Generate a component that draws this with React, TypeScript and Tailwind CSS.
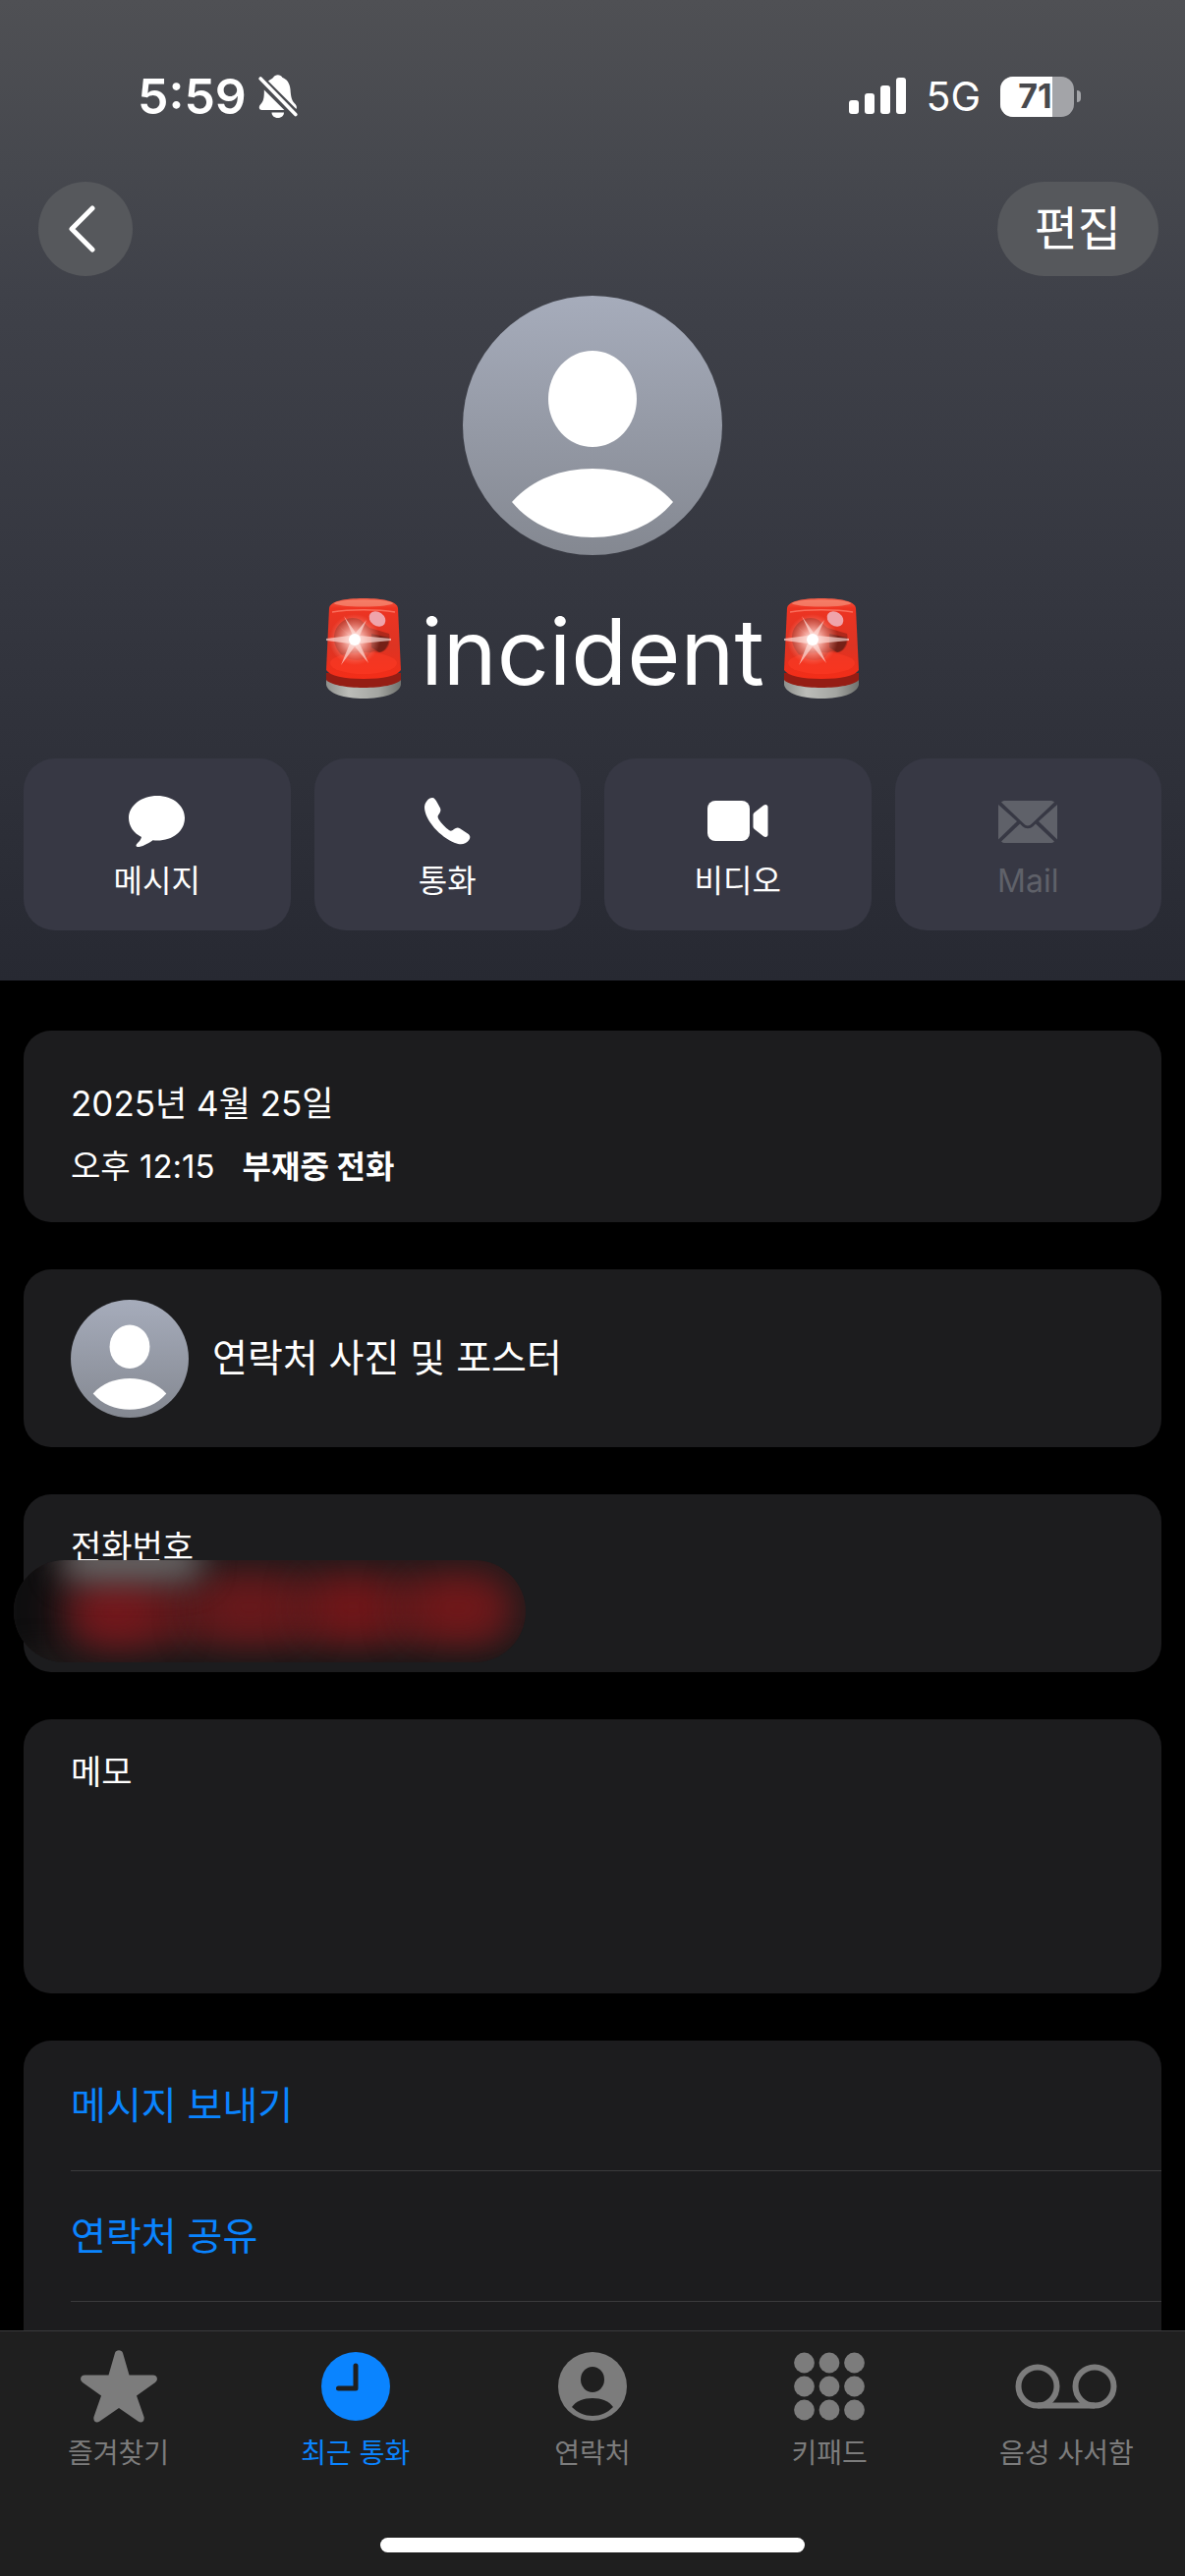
import { useId, type ReactNode } from 'react'

function BellOffIcon() {
  return (
    <svg viewBox="0 0 40 44" className="h-11 w-10" fill="#fff" aria-hidden="true">
      <path d="M10 6.500C12.500 4.500 14 4 15 3C17 -0.700 22.500 -0.700 24.500 3C29 4.500 32 9 32.500 15C33 24 34.500 27 37 29.500C38.500 31 39.500 33 38.500 35Z" />
      <path d="M5.800 15.500L26.300 36H3.500C0.500 36 0 32.500 2 30.500C5 27.500 6 24 5.800 15.500Z" />
      <path d="M13.500 38.500H26C26 41.500 23.500 44 19.700 44C16 44 13.500 41.500 13.500 38.500Z" />
      <path d="M2.200 4L37.800 40.500" stroke="#fff" strokeWidth="3.600" strokeLinecap="round" />
    </svg>
  )
}

function SignalIcon() {
  return (
    <svg viewBox="0 0 58 38" className="h-[38px] w-[58px]" fill="#fff" aria-hidden="true">
      <rect x="0" y="23" width="10" height="14" rx="3" />
      <rect x="16" y="16" width="10" height="21" rx="3" />
      <rect x="32" y="8" width="10" height="29" rx="3" />
      <rect x="48" y="0" width="10" height="37" rx="3" />
    </svg>
  )
}

function Battery({ level }: { level: number }) {
  return (
    <div className="flex items-center gap-[3px]">
      <div className="relative flex h-[41px] w-[75px] items-center justify-center overflow-hidden rounded-[13px] bg-[#a3a4a8] pr-1">
        <div className="absolute inset-y-0 left-0 bg-white" style={{ width: `${level}%` }} />
        <span className="relative text-[34px] leading-none font-bold text-[#48494d]">{level}</span>
      </div>
      <div className="h-3 w-1 rounded-r-full bg-[#a3a4a8]" />
    </div>
  )
}

function Avatar({ className }: { className: string }) {
  const id = useId()
  return (
    <svg viewBox="0 0 264 264" className={className} role="img" aria-label="프로필">
      <defs>
        <linearGradient id={id} x1="0" y1="0" x2="0" y2="1">
          <stop offset="0" stopColor="#a6acbb" />
          <stop offset="1" stopColor="#848891" />
        </linearGradient>
      </defs>
      <circle cx="132" cy="132" r="132" fill={`url(#${id})`} />
      <ellipse cx="132" cy="105" rx="45" ry="49" fill="#fff" />
      <path d="M50 210C70 187 100 176 132 176C164 176 194 187 214 210C194 234 164 246 132 246C100 246 70 234 50 210Z" fill="#fff" />
    </svg>
  )
}

function Siren() {
  const id = useId()
  return (
    <svg viewBox="0 0 76 102" className="h-[102px] w-[76px]" role="img" aria-label="🚨">
      <defs>
        <linearGradient id={`${id}d`} x1="0" y1="0" x2="0" y2="1">
          <stop offset="0" stopColor="#f5604a" />
          <stop offset="0.120" stopColor="#ee3422" />
          <stop offset="0.600" stopColor="#dd3423" />
          <stop offset="1" stopColor="#f42d18" />
        </linearGradient>
        <linearGradient id={`${id}b`} x1="0" y1="0" x2="1" y2="0">
          <stop offset="0" stopColor="#8d8f8c" />
          <stop offset="0.300" stopColor="#bcbdb9" />
          <stop offset="0.700" stopColor="#a3a5a1" />
          <stop offset="1" stopColor="#6f716e" />
        </linearGradient>
        <radialGradient id={`${id}g`}>
          <stop offset="0" stopColor="#fff" />
          <stop offset="0.350" stopColor="#ffb9b0" stopOpacity="0.850" />
          <stop offset="1" stopColor="#ff8d7c" stopOpacity="0" />
        </radialGradient>
      </defs>
      <path d="M0 80H76V88C74 97 58 102 38 102C18 102 2 97 0 88Z" fill={`url(#${id}b)`} />
      <path d="M0 76H76V83C72 88 56 91 38 91C20 91 4 88 0 83Z" fill="#951d14" />
      <path d="M3 10C4 3 18 0 38 0C58 0 72 3 73 10L76 73C72 79 58 82 38 82C18 82 4 79 0 73Z" fill={`url(#${id}d)`} />
      <path d="M10 31C17 19 28 18 35 22L44 30L64 36C66 44 64 52 56 55C50 55 47 52 44 57C38 66 22 64 14 56C8 48 6 40 10 31Z" fill="#8d2318" opacity="0.600" />
      <path d="M46 36L64 40C64 47 60 54 54 55L46 50Z" fill="#5d1c15" opacity="0.700" />
      <ellipse cx="38" cy="66" rx="34" ry="11" fill="#ff3c26" opacity="0.500" />
      <ellipse cx="38" cy="5" rx="30" ry="3.500" fill="#f58e78" opacity="0.700" />
      <path d="M6 14C24 11 52 11 70 14" stroke="#ff8775" strokeWidth="1.500" fill="none" opacity="0.700" />
      <ellipse cx="52" cy="21" rx="9" ry="7" transform="rotate(35 52 21)" fill="#efa4ab" />
      <circle cx="29" cy="42" r="26" fill={`url(#${id}g)`} />
      <path d="M29 42L18 18L30 35L41 22L34 38L66 41V43L34 46L43 66L29 49L15 68L24 46L0 43V41L24 38L10 26Z" fill="#ffe3df" opacity="0.650" />
      <circle cx="29" cy="42" r="6" fill="#fff" />
    </svg>
  )
}

function MessageIcon() {
  return (
    <svg viewBox="0 0 58 53" className="h-[53px] w-[58px]" fill="currentColor" aria-hidden="true">
      <path d="M29 0C45 0 57 10 57 22.500C57 36 45 45.500 29 45.500C27.500 45.500 26 45.300 24.500 45.200C19 49 13.500 52 9 52C7.500 52 7 50.500 8 49.300C10 47 12.500 45 13 42C5 38 0 31 0 22.500C0 10 13 0 29 0Z" />
    </svg>
  )
}

function PhoneIcon() {
  return (
    <svg viewBox="0 0 48 48" className="h-12 w-12" fill="currentColor" aria-hidden="true">
      <path d="M1 10C1 5 5 0 9 0C11 0 12.500 2 14 5L17 10.500C18 13 17 15 15.500 17C14 19 14.500 20 15.500 22C18.500 26.500 22 30 26 33C28 34.300 29 33.500 31 32C33 30.500 35 30 37 31.200L45 36.500C48 38.500 48 41 45.500 44C43 47 38.500 48.500 32 46C17 40 1.500 23 1 10Z" />
    </svg>
  )
}

function VideoIcon() {
  return (
    <svg viewBox="0 0 62 42" className="h-[42px] w-[62px]" fill="currentColor" aria-hidden="true">
      <rect x="0" y="0" width="43" height="41" rx="8" />
      <path d="M46.500 14.500C46.500 13.500 47 12.800 47.800 12L57 4.800C59 3.300 61.500 4 61.500 6.500V34.500C61.500 37 59 37.700 57 36.200L47.800 29C47 28.200 46.500 27.500 46.500 26.500Z" />
    </svg>
  )
}

function MailIcon() {
  return (
    <svg viewBox="0 0 60 43" className="h-[43px] w-[60px]" fill="currentColor" aria-hidden="true">
      <path d="M3 1.500C4 0.500 5.500 0 7 0H53C54.500 0 56 0.500 57 1.500L34 23.500C31.500 26 28.500 26 26 23.500Z" />
      <path d="M0 4L19 21L0 39.500Z" />
      <path d="M60 4L41 21L60 39.500Z" />
      <path d="M3 41.500L22 23.500L24.500 26C28 29 32 29 35.500 26L38 23.500L57 41.500C56 42.500 54.500 43 53 43H7C5.500 43 4 42.500 3 41.500Z" />
    </svg>
  )
}

function StarIcon() {
  return (
    <svg viewBox="0 0 78 74" className="h-[74px] w-[78px]" fill="currentColor" aria-hidden="true">
      <path d="M35 3C36 -0.800 42 -0.800 43 3L49.500 25.500H73.500C78 25.500 79.500 30 76 33L57 46.500L64.500 68C65.500 72.500 62 75 58.500 72.500L39 59L19.500 72.500C16 75 12.500 72.500 13.500 68L21 46.500L2 33C-1.500 30 0 25.500 4.500 25.500H28.500Z" />
    </svg>
  )
}

function ClockIcon() {
  return (
    <svg viewBox="0 0 70 70" className="h-[70px] w-[70px]" aria-hidden="true">
      <circle cx="35" cy="35" r="35" fill="currentColor" />
      <path d="M35 14V37H17.500" fill="none" stroke="#1f1f1f" strokeWidth="5" strokeLinecap="round" strokeLinejoin="round" />
    </svg>
  )
}

function ContactIcon() {
  return (
    <svg viewBox="0 0 70 70" className="h-[70px] w-[70px]" aria-hidden="true">
      <circle cx="35" cy="35" r="35" fill="currentColor" />
      <ellipse cx="35" cy="28" rx="12" ry="13" fill="#1f1f1f" />
      <path d="M14 56C18 50 26 47 35 47C44 47 52 50 56 56C50 62 43 65 35 65C27 65 20 62 14 56Z" fill="#1f1f1f" />
    </svg>
  )
}

function KeypadIcon() {
  return (
    <svg viewBox="0 0 72 70" className="h-[70px] w-[72px]" fill="currentColor" aria-hidden="true">
      {[11, 35, 59].map((cy) => [10.5, 36, 61.5].map((cx) => <circle key={`${cx}-${cy}`} cx={cx} cy={cy} r="10.400" />))}
    </svg>
  )
}

function VoicemailIcon() {
  return (
    <svg viewBox="0 0 104 46" className="h-[46px] w-[104px]" fill="none" stroke="currentColor" strokeWidth="6" aria-hidden="true">
      <circle cx="23" cy="23" r="19.500" />
      <circle cx="81" cy="23" r="19.500" />
      <path d="M23 42.500H81" />
    </svg>
  )
}

const actions = [
  { label: '메시지', icon: <MessageIcon /> },
  { label: '통화', icon: <PhoneIcon /> },
  { label: '비디오', icon: <VideoIcon /> },
  { label: 'Mail', icon: <MailIcon />, disabled: true },
]

const tabs = [
  { label: '즐겨찾기', icon: <StarIcon /> },
  { label: '최근 통화', icon: <ClockIcon />, active: true },
  { label: '연락처', icon: <ContactIcon /> },
  { label: '키패드', icon: <KeypadIcon /> },
  { label: '음성 사서함', icon: <VoicemailIcon /> },
]

function Card({ children, className = '' }: { children: ReactNode; className?: string }) {
  return <section className={`relative rounded-[28px] bg-[#1c1c1e] px-12 ${className}`}>{children}</section>
}

// Smudge that hides the phone number
function Redaction() {
  return (
    <div className="absolute top-[67px] -left-[10px] h-[104px] w-[521px] overflow-hidden rounded-[52px] bg-[#221a1b]">
      <div className="absolute -top-4 -left-8 h-36 w-20 bg-[#0f0f10] blur-lg" />
      <div className="absolute -bottom-4 left-0 h-8 w-full bg-[#1a1818] blur-md" />
      <div className="absolute top-5 left-16 h-16 w-[440px] rounded-full bg-[#551a1c] blur-lg" />
      <div className="absolute top-6 left-14 h-14 w-24 rounded-full bg-[#7c171c] blur-xl" />
      <div className="absolute top-6 left-48 h-12 w-24 rounded-full bg-[#70181b] blur-xl" />
      <div className="absolute top-6 left-[304px] h-12 w-20 rounded-full bg-[#7e1518] blur-xl" />
      <div className="absolute top-6 left-[404px] h-12 w-24 rounded-full bg-[#7c1719] blur-xl" />
      <div className="absolute -top-5 left-12 h-10 w-36 rounded-full bg-[#6c6a6a] blur-lg" />
    </div>
  )
}

export default function App() {
  return (
    <div className="flex h-screen flex-col overflow-hidden bg-black font-['Inter','Noto_Sans_CJK_KR',sans-serif] text-white">
      <header className="bg-[linear-gradient(#4f5054,#46484e_17%,#3f4149_30%,#34363f_62%,#272932)] px-6 pb-[51px]">
        <div className="flex h-[185px] items-start justify-between pt-[76px] pr-[82px] pl-[116px]">
          <div className="flex h-11 items-center gap-3">
            <span className="text-[50px] leading-none font-semibold">5:59</span>
            <BellOffIcon />
          </div>
          <div className="flex h-11 items-center gap-5">
            <SignalIcon />
            <span className="text-[41px] leading-none">5G</span>
            <Battery level={71} />
          </div>
        </div>

        <div className="flex justify-between pr-[3px] pl-[15px]">
          <button aria-label="뒤로" className="flex size-24 items-center justify-center rounded-full bg-[#56585c]">
            <svg viewBox="0 0 28 48" className="mr-2 h-12 w-7" fill="none" stroke="#fff" strokeWidth="5" strokeLinecap="round" strokeLinejoin="round" aria-hidden="true">
              <path d="M25 3L4 24L25 45" />
            </svg>
          </button>
          <button className="h-24 rounded-full bg-[#56585c] px-[38px] text-[48px] leading-none">편집</button>
        </div>

        <div className="mt-5 flex flex-col items-center">
          <Avatar className="size-[264px]" />
          <h1 className="mt-11 flex items-end gap-5 text-[93px] leading-[96px]">
            <Siren />
            incident
            <Siren />
          </h1>
        </div>

        <div className="mt-[61px] grid grid-cols-4 gap-6">
          {actions.map(({ label, icon, disabled }) => (
            <button
              key={label}
              disabled={disabled}
              className="flex h-[175px] flex-col items-center rounded-[32px] bg-[#373844] pt-8 text-[32px] leading-[42px] disabled:text-[#5f6169]"
            >
              <span className="mb-2 flex h-16 items-center">{icon}</span>
              {label}
            </button>
          ))}
        </div>
      </header>

      <main className="flex min-h-0 flex-1 flex-col gap-12 px-6 pt-[51px]">
        <Card className="h-[195px] pt-12">
          <p className="text-[35px] leading-[52px]">2025년 4월 25일</p>
          <p className="mt-3 flex items-baseline gap-7 text-[33px] leading-[52px]">
            <span>오후 12:15</span>
            <span className="text-[32px] font-bold">부재중 전화</span>
          </p>
        </Card>

        <Card className="flex h-[181px] items-center gap-6">
          <Avatar className="size-[120px]" />
          <span className="text-[39px]">연락처 사진 및 포스터</span>
        </Card>

        <Card className="h-[181px] pt-7">
          <h2 className="text-[34px] leading-[52px]">전화번호</h2>
          <Redaction />
        </Card>

        <Card className="h-[279px] pt-7">
          <h2 className="text-[34px] leading-[52px]">메모</h2>
        </Card>

        <section className="flex-1 rounded-t-[28px] bg-[#1c1c1e] pl-12 text-[39px] text-[#0a84ff]">
          <button className="block h-[133px] w-full border-b border-[#3a3a3c] text-left">메시지 보내기</button>
          <button className="block h-[133px] w-full border-b border-[#3a3a3c] text-left">연락처 공유</button>
        </section>
      </main>

      <nav className="flex h-[250px] flex-col items-center justify-between border-t border-[#3a3a3c] bg-[#1f1f1f] pb-6">
        <div className="grid w-full grid-cols-5 pt-4">
          {tabs.map(({ label, icon, active }) => (
            <button
              key={label}
              className={`flex flex-col items-center text-[28px] leading-10 ${active ? 'text-[#0a84ff]' : 'text-[#7c7c7c]'}`}
            >
              <span className="mb-2 flex h-20 items-center">{icon}</span>
              {label}
            </button>
          ))}
        </div>
        <div className="h-[15px] w-[432px] rounded-full bg-white" />
      </nav>
    </div>
  )
}
